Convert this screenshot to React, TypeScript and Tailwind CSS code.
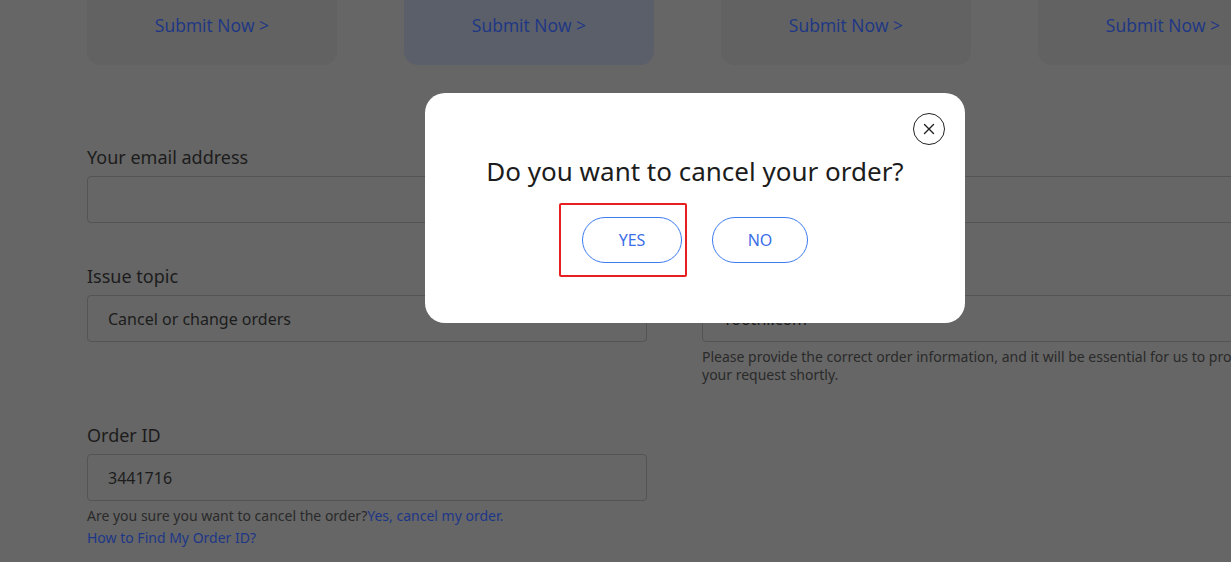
import React from "react";

const cards = [
  { bg: "bg-[#626262]" },
  { bg: "bg-[#5b5f69]" },
  { bg: "bg-[#626262]" },
  { bg: "bg-[#626262]" },
];

function Field({ label, value, children }: { label: string; value?: string; children?: React.ReactNode }) {
  return (
    <div className="flex flex-col">
      <div className="text-[18px] leading-[22px] text-[#1c1c1c]">{label}</div>
      <div className="mt-[8px] h-[47px] rounded-[4px] border border-[#545454] flex items-center pl-[20px] text-[16px] text-[#1c1c1c]">
        {value}
      </div>
      {children}
    </div>
  );
}

export default function App() {
  return (
    <div
      className="relative w-[1231px] h-[562px] overflow-hidden bg-[#666666]"
      style={{ fontFamily: "'Noto Sans', Lato, sans-serif" }}
    >
      <div className="pl-[87px] w-[1400px]">
        <div className="flex gap-[67px]">
          {cards.map((c, i) => (
            <div
              key={i}
              className={`${c.bg} w-[250px] h-[65px] rounded-b-[14px] flex justify-center pt-[14px]`}
            >
              <span
                className="text-[17.5px] leading-[22px] text-[#1d3686]"
                style={{ fontFamily: "'Open Sans', sans-serif" }}
              >
                Submit Now &gt;
              </span>
            </div>
          ))}
        </div>

        <div className="mt-[81px] grid grid-cols-[560px_560px] gap-x-[55px] gap-y-[42px]">
          <Field label="Your email address" />
          <Field label="Your name" />
          <Field label="Issue topic" value="Cancel or change orders" />
          <Field label="Website" value="Yoothi.com">
            <p className="mt-[6px] text-[14px] leading-[18px] text-[#2a2a2a] w-[560px]">
              Please provide the correct order information, and it will be essential for us to process
              your request shortly.
            </p>
          </Field>
          <div className="-mt-[2px]">
            <Field label="Order ID" value="3441716">
              <p className="mt-[6px] text-[14px] leading-[18px] text-[#2a2a2a]">
                Are you sure you want to cancel the order?<span className="text-[#1d3686]">Yes, cancel my order.</span>
              </p>
              <p className="mt-[4px] text-[14px] leading-[18px] text-[#1d3686]">How to Find My Order ID?</p>
            </Field>
          </div>
        </div>
      </div>

      <div className="absolute left-[425px] top-[93px] w-[540px] h-[230px] rounded-[20px] bg-white flex flex-col items-center">
        <button className="absolute right-[20px] top-[20px] w-[32px] h-[32px] rounded-full border border-[#222] flex items-center justify-center">
          <svg width="12" height="12" viewBox="0 0 12 12" fill="none" stroke="#222" strokeWidth="1.4" strokeLinecap="round">
            <path d="M1.5 1.5 L10.5 10.5 M10.5 1.5 L1.5 10.5" />
          </svg>
        </button>
        <h2 className="mt-[62px] text-[26px] leading-[32px] text-[#1c1c1c]">Do you want to cancel your order?</h2>
        <div className="mt-[30px] flex gap-[30px]">
          <button className="w-[100px] h-[46px] rounded-full border border-[#3b7cf0] text-[16px] text-[#3b6fe8]">YES</button>
          <button className="w-[96px] h-[46px] rounded-full border border-[#3b7cf0] text-[16px] text-[#3b6fe8]">NO</button>
        </div>
        <div className="absolute left-[134px] top-[110px] w-[128px] h-[74px] border-2 border-[#e62020] rounded-[2px] pointer-events-none" />
      </div>
    </div>
  );
}
